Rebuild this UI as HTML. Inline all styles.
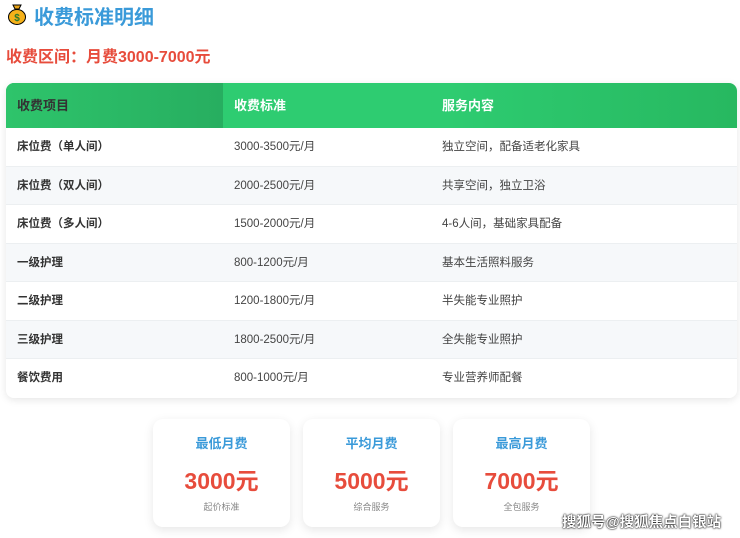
<!DOCTYPE html>
<html><head><meta charset="utf-8"><style>
*{margin:0;padding:0;box-sizing:border-box}
body{width:740px;height:538px;background:#fff;font-family:"Liberation Sans","Noto Sans CJK SC",sans-serif;position:relative;overflow:hidden}
.t{position:absolute;left:34px;top:1px;font-size:20px;font-weight:700;color:#3a9ad9}
.ic{position:absolute;left:7px;top:3px}
.r{position:absolute;left:6px;top:43px;font-size:16px;font-weight:700;color:#e74c3c}
.tbl{position:absolute;left:6px;top:83px;width:731px;border-radius:8px;overflow:hidden;box-shadow:0 2px 8px rgba(0,0,0,.1)}
.h{display:flex;height:45px;background:linear-gradient(90deg,#2fbf66,#2ecc71 60%,#27b860);color:#fff;font-weight:700;font-size:13px}
.h div{line-height:45px;padding-left:11px}
.h div:first-child{background:linear-gradient(90deg,#2ec46b,#27ae60)}
.h div:nth-child(2){background:#2ecc71}
.row{display:flex;height:38.5px;line-height:39px;font-size:11.5px;color:#444;border-bottom:1px solid #eceff1}
.row:nth-child(odd){background:#fff}.row:nth-child(even){background:#f6f8fa}
.row:last-child{border-bottom:none}
.c1{width:217px;padding-left:11px;font-weight:700;color:#333}
.c2{width:208px;padding-left:11px}
.c3{padding-left:11px}
.h .c1{width:217px}.h .c2{width:208px}.h .c3{flex:1}
.card{position:absolute;top:419px;width:137px;height:108px;border-radius:10px;background:#fff;box-shadow:0 3px 10px rgba(0,0,0,.1);text-align:center}
.card .a{margin-top:14px;font-size:13px;font-weight:700;color:#3a9ad9}
.card .b{margin-top:10px;font-size:23px;font-weight:700;color:#e74c3c}
.card .c{margin-top:4px;font-size:9px;color:#888}
.wm{position:absolute;left:562px;top:511px;font-size:14.5px;color:#fff;font-weight:700;text-shadow:0 0 2px #000,0 0 1px #000}
</style></head><body>
<svg class="ic" width="20" height="22" viewBox="0 0 20 22"><path d="M6 2 L14 2 L12 6 L8 6Z" fill="#e8a317" stroke="#000" stroke-width="1"/><ellipse cx="10" cy="14" rx="8.5" ry="7.5" fill="#f5b11a" stroke="#000" stroke-width="1"/><text x="10" y="18" font-size="10" text-anchor="middle" fill="#2d7a2d" font-weight="700">$</text></svg>
<div class="t">收费标准明细</div>
<div class="r">收费区间：月费3000-7000元</div>
<div class="tbl">
<div class="h"><div class="c1">收费项目</div><div class="c2">收费标准</div><div class="c3">服务内容</div></div>
<div>
<div class="row"><div class="c1">床位费（单人间）</div><div class="c2">3000-3500元/月</div><div class="c3">独立空间，配备适老化家具</div></div>
<div class="row"><div class="c1">床位费（双人间）</div><div class="c2">2000-2500元/月</div><div class="c3">共享空间，独立卫浴</div></div>
<div class="row"><div class="c1">床位费（多人间）</div><div class="c2">1500-2000元/月</div><div class="c3">4-6人间，基础家具配备</div></div>
<div class="row"><div class="c1">一级护理</div><div class="c2">800-1200元/月</div><div class="c3">基本生活照料服务</div></div>
<div class="row"><div class="c1">二级护理</div><div class="c2">1200-1800元/月</div><div class="c3">半失能专业照护</div></div>
<div class="row"><div class="c1">三级护理</div><div class="c2">1800-2500元/月</div><div class="c3">全失能专业照护</div></div>
<div class="row"><div class="c1">餐饮费用</div><div class="c2">800-1000元/月</div><div class="c3">专业营养师配餐</div></div>
</div></div>
<div class="card" style="left:153px"><div class="a">最低月费</div><div class="b">3000元</div><div class="c">起价标准</div></div>
<div class="card" style="left:303px"><div class="a">平均月费</div><div class="b">5000元</div><div class="c">综合服务</div></div>
<div class="card" style="left:453px"><div class="a">最高月费</div><div class="b">7000元</div><div class="c">全包服务</div></div>
<div class="wm">搜狐号@搜狐焦点白银站</div>
</body></html>
